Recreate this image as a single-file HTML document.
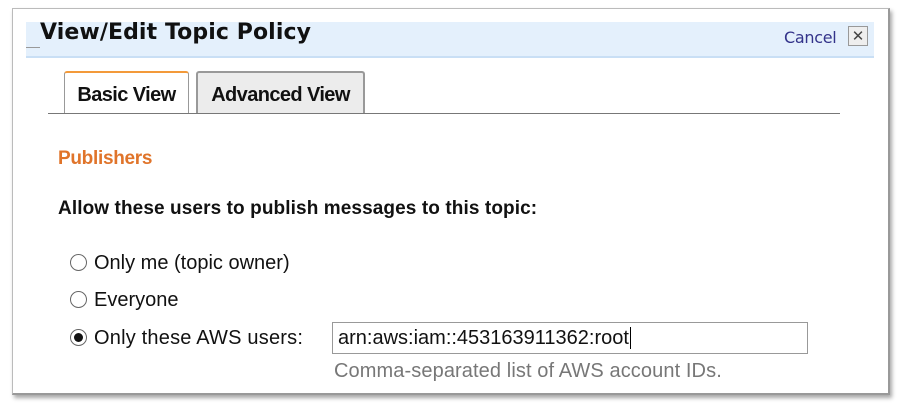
<!DOCTYPE html>
<html><head><style>
body{margin:0;width:900px;height:408px;background:#fff;position:relative;overflow:hidden;font-family:"Liberation Sans",Arial,sans-serif}
.frame{position:absolute;left:12px;top:8px;width:875px;height:384px;border:1px solid #bbb;border-right:2px solid #999;border-bottom:2px solid #999;box-shadow:2px 3px 4px rgba(0,0,0,.35)}
.hdr{position:absolute;left:26px;top:22px;width:848px;height:34px;background:#e4f0fc;border-bottom:2px solid #c9dff5}
.title{position:absolute;left:40px;top:20px;font:bold 22px "DejaVu Sans",sans-serif;color:#111;letter-spacing:0.1px}
.cancel{position:absolute;left:784px;top:28px;font:16px "DejaVu Sans",sans-serif;color:#33338a;letter-spacing:-0.3px}
.x{position:absolute;left:848px;top:26px;width:18px;height:18px;border:1px solid #999;background:#eee;font:bold 15px "DejaVu Sans";color:#444;text-align:center;line-height:18px}
.tab{position:absolute;top:72px;height:40px;border:1px solid #999;border-bottom:none;font:bold 20px "Liberation Sans",sans-serif;letter-spacing:-0.6px;color:#111;line-height:44px;text-align:center;border-radius:3px 3px 0 0}
.line{position:absolute;left:48px;top:113px;width:792px;height:1px;background:#777}
.t{position:absolute;white-space:nowrap;font-family:"Liberation Sans",sans-serif}
.radio{position:absolute;left:70px;width:17px;height:17px;border:1px solid #666;border-radius:50%;background:#fff;box-sizing:border-box}
</style></head><body>
<div class="frame"></div>
<div class="hdr"></div>
<div style="position:absolute;left:26px;top:47px;width:14px;height:1px;background:#999"></div>
<div class="title">View/Edit Topic Policy</div>
<div class="cancel">Cancel</div>
<div class="x">✕</div>
<div class="tab" style="left:64px;width:123px;background:#fff;border-top:2px solid #f39a3a;top:71px">Basic View</div>
<div class="tab" style="left:196px;width:165px;background:#ececec;border:2px solid #999;border-bottom:none;top:71px">Advanced View</div>
<div class="line"></div>
<div class="t" style="left:58px;top:148px;font-size:19px;font-weight:bold;color:#e0742a;letter-spacing:-0.3px">Publishers</div>
<div class="t" style="left:58px;top:198px;font-size:19px;font-weight:bold;color:#111;letter-spacing:0.1px">Allow these users to publish messages to this topic:</div>
<div class="radio" style="top:254px"></div>
<div class="t" style="left:94px;top:252px;font-size:20px;color:#111;letter-spacing:0px">Only me (topic owner)</div>
<div class="radio" style="top:291px"></div>
<div class="t" style="left:94px;top:289px;font-size:20px;color:#111;letter-spacing:0px">Everyone</div>
<div class="radio" style="top:329px"><div style="position:absolute;left:3px;top:3px;width:9px;height:9px;border-radius:50%;background:#111"></div></div>
<div class="t" style="left:94px;top:327px;font-size:20px;color:#111;letter-spacing:0.2px">Only these AWS users:</div>
<div style="position:absolute;left:332px;top:322px;width:476px;height:32px;border:1px solid #999;box-sizing:border-box"></div>
<div class="t" style="left:338px;top:327px;font-size:20px;color:#111;letter-spacing:0px">arn:aws:iam::453163911362:root<span style="border-left:1px solid #000;margin-left:1px"></span></div>
<div class="t" style="left:334px;top:360px;font-size:20px;color:#777;letter-spacing:0.1px">Comma-separated list of AWS account IDs.</div>
</body></html>
